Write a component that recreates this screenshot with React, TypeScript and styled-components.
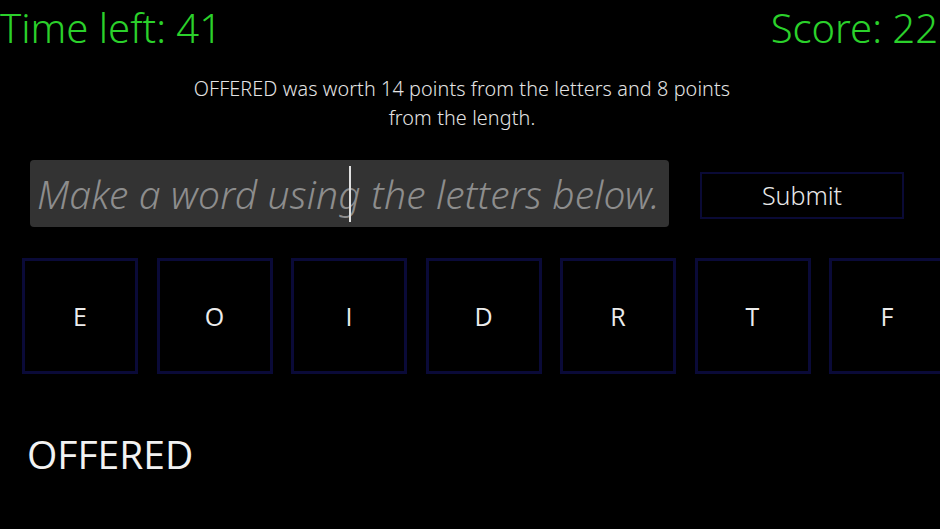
import React from 'react'
import styled, { createGlobalStyle } from 'styled-components'

const GlobalStyle = createGlobalStyle`
  html, body {
    margin: 0;
    padding: 0;
    background: #000;
    overflow: hidden;
  }
  body {
    font-family: 'Noto Sans', 'Open Sans', sans-serif;
  }
`

const Page = styled.div`
  width: 940px;
  height: 529px;
  display: flex;
  flex-direction: column;
  overflow: hidden;
`
const Header = styled.header`
  display: flex;
  justify-content: space-between;
  align-items: flex-start;
  height: 56px;
  padding: 0 2px 0 0;
`
const Stat = styled.div`
  color: #2bd12b;
  font-size: 40px;
  line-height: 56px;
  font-weight: 300;
`
const Message = styled.p`
  margin: 18px 0 0 177px;
  width: 570px;
  text-align: center;
  color: #e4e4e4;
  font-size: 19.8px;
  line-height: 29px;
  font-weight: 300;
  letter-spacing: 0.1px;
`
const EntryRow = styled.div`
  display: flex;
  align-items: center;
  gap: 31px;
  margin: 28px 0 0 30px;
`
const WordInput = styled.div`
  position: relative;
  width: 639px;
  height: 67px;
  background: #333;
  border-radius: 4px;
  display: flex;
  align-items: center;
  padding-left: 7px;
  box-sizing: border-box;
  overflow: hidden;
`
const Placeholder = styled.span`
  color: #8d8d8d;
  font-size: 39px;
  font-style: italic;
  font-weight: 300;
  letter-spacing: 0.2px;
  white-space: nowrap;
`
const Caret = styled.span`
  position: absolute;
  left: 319px;
  top: 6px;
  width: 1.5px;
  height: 56px;
  background: #e0e0e0;
`
const SubmitButton = styled.button`
  width: 204px;
  height: 47px;
  background: #000;
  border: 2px solid #0a0a36;
  color: #e8e8e8;
  font-family: 'Noto Sans', 'Open Sans', sans-serif;
  font-size: 25px;
  font-weight: 300;
  margin-top: 3px;
`
const TileRow = styled.div`
  display: flex;
  gap: 18.5px;
  margin: 31px 0 0 22px;
`
const Tile = styled.div`
  flex: 0 0 auto;
  width: 116px;
  height: 116px;
  box-sizing: border-box;
  border: 3px solid #0a0a38;
  display: flex;
  align-items: center;
  justify-content: center;
  color: #ececec;
  font-family: 'Open Sans', sans-serif;
  font-size: 25px;
`
const CurrentWord = styled.div`
  margin: 58px 0 0 27px;
  color: #f2f2f2;
  font-family: 'Open Sans', sans-serif;
  font-size: 39px;
  line-height: 44px;
`

const letters = ['E', 'O', 'I', 'D', 'R', 'T', 'F']

export default function App() {
  return (
    <Page>
      <GlobalStyle />
      <Header>
        <Stat>Time left: 41</Stat>
        <Stat>Score: 22</Stat>
      </Header>
      <Message>
        OFFERED was worth 14 points from the letters and 8 points from the length.
      </Message>
      <EntryRow>
        <WordInput>
          <Placeholder>Make a word using the letters below.</Placeholder>
          <Caret />
        </WordInput>
        <SubmitButton>Submit</SubmitButton>
      </EntryRow>
      <TileRow>
        {letters.map((l, i) => (
          <Tile key={i}>{l}</Tile>
        ))}
      </TileRow>
      <CurrentWord>OFFERED</CurrentWord>
    </Page>
  )
}
